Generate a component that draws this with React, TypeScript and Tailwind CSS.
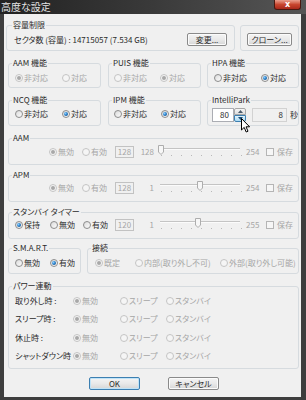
import React from "react";

const EN = "text-[#2b2b2b]";
const DIS = "text-[#a6a6a6]";

function RadioIcon({ checked = false, disabled = false }: { checked?: boolean; disabled?: boolean }) {
  return (
    <svg width="8" height="8" viewBox="0 0 8 8" className="shrink-0">
      <circle cx="4" cy="4" r="3.5" fill={disabled ? "#f5f5f5" : "url(#rgFill)"} stroke={disabled ? "#c4c4c4" : "#8c8c8c"} strokeWidth="1" />
      {checked && <circle cx="4" cy="4" r="2" fill={disabled ? "#a8a8a8" : "url(#rgDot)"} />}
    </svg>
  );
}

function Radio({ label, checked = false, disabled = false, className = "" }: { label: string; checked?: boolean; disabled?: boolean; className?: string }) {
  return (
    <div className={"flex items-center gap-[1px] whitespace-nowrap overflow-hidden shrink-0 " + className}>
      <RadioIcon checked={checked} disabled={disabled} />
      <span className={disabled ? DIS : EN}>{label}</span>
    </div>
  );
}

function Group({ label, className = "", labelLeft = "left-[3px]", children }: { label: string; className?: string; labelLeft?: string; children?: React.ReactNode }) {
  return (
    <div className={"relative border border-[#d6dbdf] rounded-[3px] shrink-0 " + className}>
      {label && (
        <span className={"absolute top-[-6px] px-[1px] bg-[#f0f0f0] leading-[10px] whitespace-nowrap " + EN + " " + labelLeft}>{label}</span>
      )}
      {children}
    </div>
  );
}

function Btn({ label, className = "", def = false }: { label: string; className?: string; def?: boolean }) {
  return (
    <div
      className={
        "h-[13px] flex items-center justify-center rounded-[2px] border shrink-0 bg-linear-to-b from-[#f4f4f4] via-[#e9e9e9] to-[#d6d6d6] " +
        (def ? "border-[#3c7fb1] shadow-[inset_0_0_0_1px_#bfe3f8] " : "border-[#8a8a8a] shadow-[inset_0_0_0_1px_#fbfbfb] ") +
        EN + " " + className
      }
    >
      {label}
    </div>
  );
}

function TextBox({ value, className = "" }: { value: string; className?: string }) {
  return (
    <div className={"h-[12px] border border-[#c2c2c2] bg-[#f0f0f0] flex items-center justify-center shrink-0 " + DIS + " " + className}>
      {value}
    </div>
  );
}

function Slider({ thumb }: { thumb: number }) {
  const ticks = Array.from({ length: 9 }, (_, i) => 6 + i * 10);
  return (
    <svg width="90" height="14" viewBox="0 0 90 14" className="shrink-0">
      <line x1="5" y1="3.5" x2="85" y2="3.5" stroke="#c4c4c4" />
      <line x1="5" y1="4.5" x2="85" y2="4.5" stroke="#fbfbfb" />
      {ticks.map((x) => (
        <rect key={x} x={x} y="10" width="1" height="1" fill="#b9b9b9" />
      ))}
      <path d={`M${thumb + 0.5} 0.5 h5 v6.5 l-2.5 2.5 l-2.5 -2.5 z`} fill="#f7f7f7" stroke="#adadad" />
    </svg>
  );
}

function CheckSave() {
  return (
    <div className="flex items-center gap-[3px] ml-[1px] shrink-0">
      <div className="w-[8px] h-[8px] border border-[#b5b5b5] bg-[#f6f6f6]" />
      <span className={DIS}>保存</span>
    </div>
  );
}

function SliderRow({
  lead,
  minLabel,
  maxLabel,
  thumb,
  value,
}: {
  lead: React.ReactNode;
  minLabel: string;
  maxLabel: string;
  thumb: number;
  value: string;
}) {
  return (
    <div className="flex items-center h-[12px]">
      {lead}
      <TextBox value={value} className="w-[19px]" />
      <div className={"w-[21px] text-right pr-[1px] shrink-0 " + DIS}>{minLabel}</div>
      <Slider thumb={thumb} />
      <div className={"w-[20px] pl-[1px] shrink-0 " + DIS}>{maxLabel}</div>
      <CheckSave />
    </div>
  );
}

function PowerRow({ label, className = "" }: { label: string; className?: string }) {
  return (
    <div className={"flex items-center h-[10px] " + className}>
      <div className={"w-[58px] shrink-0 whitespace-nowrap overflow-hidden " + EN}>{label}</div>
      <Radio label="無効" checked disabled className="w-[47px]" />
      <Radio label="スリープ" disabled className="w-[46px]" />
      <Radio label="スタンバイ" disabled />
    </div>
  );
}

export default function App() {
  return (
    <div className="relative w-[306px] h-[400px] bg-[#3e3e3e] flex flex-col overflow-hidden font-['Noto_Sans_CJK_JP','Noto_Sans',sans-serif] [font-feature-settings:'palt'] text-[8px] leading-[10px]">
      <svg width="0" height="0" className="absolute">
        <defs>
          <linearGradient id="rgFill" x1="0" y1="0" x2="1" y2="1">
            <stop offset="0" stopColor="#d8d8d8" />
            <stop offset="1" stopColor="#ffffff" />
          </linearGradient>
          <radialGradient id="rgDot" cx="0.35" cy="0.35" r="0.8">
            <stop offset="0" stopColor="#8fd0ff" />
            <stop offset="0.5" stopColor="#2f86cf" />
            <stop offset="1" stopColor="#114a86" />
          </radialGradient>
        </defs>
      </svg>

      {/* title bar */}
      <div className="h-[14px] shrink-0 flex items-start justify-between bg-linear-to-r from-[#222222] via-[#3a3a3a] to-[#565656]">
        <span className="pl-[1px] pt-[1px] text-[10px] leading-[12px] text-[#e6e6e6]">高度な設定</span>
        <div className="mr-[5px] w-[27px] h-[10px] rounded-b-[3px] border border-t-0 border-[#4a1810] bg-linear-to-b from-[#e9a08f] via-[#c8462f] to-[#a8281a] flex items-center justify-center text-white text-[8px] leading-[8px] font-bold font-['DejaVu_Sans',sans-serif]">
          x
        </div>
      </div>

      {/* body */}
      <div className="flex-1 ml-[4px] mr-[5px] mb-[3px] bg-[#f0f0f0] flex flex-col pl-[4px] pr-[2px]">
        {/* row 1 */}
        <div className="flex mt-[11px]">
          <Group label="容量制限" className="ml-[-2px] w-[229px] h-[26px] pt-[7px] px-[7px]" labelLeft="left-[5px]">
            <div className="flex items-center justify-between h-[13px]">
              <span className={EN}>セクタ数 (容量) : 14715057 (7.534 GB)</span>
              <Btn label="変更..." className="w-[40px]" />
            </div>
          </Group>
          <Group label="" className="ml-[5px] w-[59px] h-[26px] pt-[7px] pl-[6px]">
            <Btn label="クローン..." className="w-[45px]" />
          </Group>
        </div>

        {/* row 2 */}
        <div className="flex mt-[12px]">
          <Group label="AAM 機能" className="w-[93px] h-[25px] pt-[9px] pl-[6px]">
            <div className="flex h-[10px]">
              <Radio label="非対応" checked disabled className="w-[47px]" />
              <Radio label="対応" disabled />
            </div>
          </Group>
          <Group label="PUIS 機能" className="ml-[7px] w-[93px] h-[25px] pt-[9px] pl-[5px]">
            <div className="flex h-[10px]">
              <Radio label="非対応" disabled className="w-[46px]" />
              <Radio label="対応" checked disabled />
            </div>
          </Group>
          <Group label="HPA 機能" className="ml-[6px] w-[92px] h-[25px] pt-[9px] pl-[6px]">
            <div className="flex h-[10px]">
              <Radio label="非対応" className="w-[47px]" />
              <Radio label="対応" checked />
            </div>
          </Group>
        </div>

        {/* row 3 */}
        <div className="flex mt-[12px]">
          <Group label="NCQ 機能" className="w-[93px] h-[26px] pt-[8px] pl-[6px]">
            <div className="flex h-[10px]">
              <Radio label="非対応" className="w-[47px]" />
              <Radio label="対応" checked />
            </div>
          </Group>
          <Group label="IPM 機能" className="ml-[7px] w-[93px] h-[26px] pt-[8px] pl-[5px]">
            <div className="flex h-[10px]">
              <Radio label="非対応" className="w-[47px]" />
              <Radio label="対応" checked />
            </div>
          </Group>
          <Group label="IntelliPark" className="ml-[6px] w-[92px] h-[26px] pt-[7px] pl-[4px]">
            <div className="flex items-center h-[14px]">
              <div className={"w-[22px] h-[14px] border border-[#abadb3] bg-white flex items-center justify-end pr-[4px] " + EN}>80</div>
              <div className="w-[12px] h-[14px] flex flex-col">
                <div className="h-[7px] border border-[#a7a7a7] rounded-t-[2px] bg-linear-to-b from-[#f6f6f6] to-[#dedede] flex items-center justify-center">
                  <svg width="5" height="3" viewBox="0 0 5 3"><path d="M0 3 L2.5 0 L5 3 z" fill="#4a5a6a" /></svg>
                </div>
                <div className="h-[7px] border border-[#3c7fb1] rounded-b-[2px] bg-linear-to-b from-[#e3f4fc] to-[#a9d9f2] flex items-center justify-center">
                  <svg width="5" height="3" viewBox="0 0 5 3"><path d="M0 0 L2.5 3 L5 0 z" fill="#1d4f79" /></svg>
                </div>
              </div>
              <div className={"ml-[6px] w-[35px] h-[14px] border border-[#d2d2d2] bg-[#f0f0f0] flex items-center justify-end pr-[3px] " + EN}>8</div>
              <span className={"ml-[3px] " + EN}>秒</span>
            </div>
          </Group>
        </div>

        {/* AAM */}
        <Group label="AAM" className="mt-[12px] w-[291px] h-[27px] pt-[7px] pl-[40px]">
          <SliderRow
            lead={
              <>
                <Radio label="無効" checked disabled className="w-[33px]" />
                <Radio label="有効" disabled className="w-[33px]" />
              </>
            }
            value="128"
            minLabel="128"
            maxLabel="254"
            thumb={3}
          />
        </Group>

        {/* APM */}
        <Group label="APM" className="mt-[10px] w-[291px] h-[27px] pt-[6px] pl-[40px]">
          <SliderRow
            lead={
              <>
                <Radio label="無効" checked disabled className="w-[33px]" />
                <Radio label="有効" disabled className="w-[33px]" />
              </>
            }
            value="128"
            minLabel="1"
            maxLabel="254"
            thumb={42}
          />
        </Group>

        {/* Standby */}
        <Group label="スタンバイ タイマー" className="mt-[10px] w-[291px] h-[27px] pt-[6px] pl-[6px]">
          <SliderRow
            lead={
              <>
                <Radio label="保持" checked className="w-[35px]" />
                <Radio label="無効" className="w-[33px]" />
                <Radio label="有効" className="w-[32px]" />
              </>
            }
            value="120"
            minLabel="1"
            maxLabel="255"
            thumb={40}
          />
        </Group>

        {/* SMART + 接続 */}
        <div className="flex mt-[9px]">
          <Group label="S.M.A.R.T." className="w-[73px] h-[26px] pt-[9px] pl-[6px]">
            <div className="flex h-[10px]">
              <Radio label="無効" className="w-[35px]" />
              <Radio label="有効" checked />
            </div>
          </Group>
          <Group label="接続" className="ml-[6px] w-[212px] h-[26px] pt-[9px] pl-[7px]">
            <div className="flex h-[10px] overflow-hidden pr-[1px]">
              <Radio label="既定" checked disabled className="w-[40px]" />
              <Radio label="内部(取り外し不可)" disabled className="w-[84px]" />
              <Radio label="外部(取り外し可能)" disabled className="ml-[1px] w-[77px]" />
            </div>
          </Group>
        </div>

        {/* Power */}
        <Group label="パワー連動" className="mt-[12px] w-[291px] h-[83px] pt-[9px] pl-[6px]">
          <PowerRow label="取り外し時 :" />
          <PowerRow label="スリープ時 :" className="mt-[8px]" />
          <PowerRow label="休止時 :" className="mt-[9px]" />
          <PowerRow label="シャットダウン時" className="mt-[8px]" />
        </Group>

        {/* buttons */}
        <div className="flex justify-center gap-[28px] mt-[8px] pl-[1px]">
          <Btn label="OK" def className="w-[51px]" />
          <Btn label="キャンセル" className="w-[51px]" />
        </div>
      </div>

      {/* mouse cursor */}
      <svg width="10" height="16" viewBox="0 0 10 16" className="absolute left-[241px] top-[118px]">
        <path d="M0.5 0.5 L0.5 12 L3.2 9.4 L5.2 14 L7 13.2 L5 8.8 L8.6 8.8 Z" fill="#ffffff" stroke="#000000" strokeWidth="1" strokeLinejoin="miter" />
      </svg>
    </div>
  );
}
